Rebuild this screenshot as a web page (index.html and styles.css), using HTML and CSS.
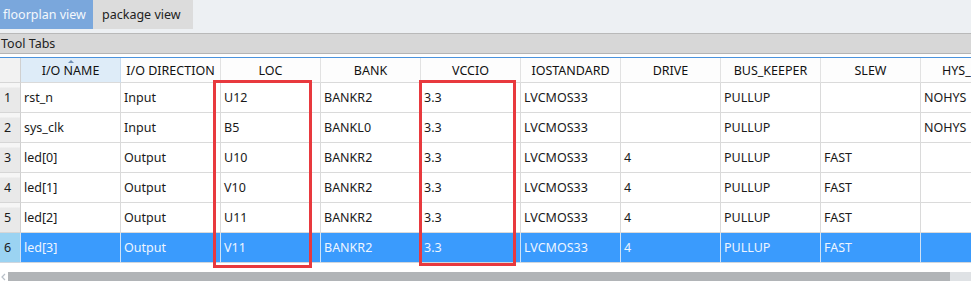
FILE: index.html
```html
<!DOCTYPE html>
<html lang="en">
<head>
  <meta charset="UTF-8">
  <title>IO Constraints</title>
  <link rel="stylesheet" href="styles.css">
</head>
<body>

<div class="tabbar">
  <div class="tab active">floorplan view</div>
  <div class="tab">package view</div>
</div>

<div class="toolbar">Tool Tabs</div>

<div class="grid-wrap">
  <div class="row head">
    <div class="cell num"></div>
    <div class="cell sorted">I/O NAME<span class="caret"></span></div>
    <div class="cell">I/O DIRECTION</div>
    <div class="cell">LOC</div>
    <div class="cell">BANK</div>
    <div class="cell">VCCIO</div>
    <div class="cell">IOSTANDARD</div>
    <div class="cell">DRIVE</div>
    <div class="cell">BUS_KEEPER</div>
    <div class="cell">SLEW</div>
    <div class="cell last">HYS_</div>
  </div>

  <div class="row">
    <div class="cell num">1</div>
    <div class="cell">rst_n</div>
    <div class="cell">Input</div>
    <div class="cell">U12</div>
    <div class="cell">BANKR2</div>
    <div class="cell">3.3</div>
    <div class="cell">LVCMOS33</div>
    <div class="cell"></div>
    <div class="cell">PULLUP</div>
    <div class="cell"></div>
    <div class="cell last">NOHYS</div>
  </div>
  <div class="row">
    <div class="cell num">2</div>
    <div class="cell">sys_clk</div>
    <div class="cell">Input</div>
    <div class="cell">B5</div>
    <div class="cell">BANKL0</div>
    <div class="cell">3.3</div>
    <div class="cell">LVCMOS33</div>
    <div class="cell"></div>
    <div class="cell">PULLUP</div>
    <div class="cell"></div>
    <div class="cell last">NOHYS</div>
  </div>
  <div class="row">
    <div class="cell num">3</div>
    <div class="cell">led[0]</div>
    <div class="cell">Output</div>
    <div class="cell">U10</div>
    <div class="cell">BANKR2</div>
    <div class="cell">3.3</div>
    <div class="cell">LVCMOS33</div>
    <div class="cell">4</div>
    <div class="cell">PULLUP</div>
    <div class="cell">FAST</div>
    <div class="cell last"></div>
  </div>
  <div class="row">
    <div class="cell num">4</div>
    <div class="cell">led[1]</div>
    <div class="cell">Output</div>
    <div class="cell">V10</div>
    <div class="cell">BANKR2</div>
    <div class="cell">3.3</div>
    <div class="cell">LVCMOS33</div>
    <div class="cell">4</div>
    <div class="cell">PULLUP</div>
    <div class="cell">FAST</div>
    <div class="cell last"></div>
  </div>
  <div class="row">
    <div class="cell num">5</div>
    <div class="cell">led[2]</div>
    <div class="cell">Output</div>
    <div class="cell">U11</div>
    <div class="cell">BANKR2</div>
    <div class="cell">3.3</div>
    <div class="cell">LVCMOS33</div>
    <div class="cell">4</div>
    <div class="cell">PULLUP</div>
    <div class="cell">FAST</div>
    <div class="cell last"></div>
  </div>
  <div class="row selected">
    <div class="cell num">6</div>
    <div class="cell">led[3]</div>
    <div class="cell">Output</div>
    <div class="cell">V11</div>
    <div class="cell">BANKR2</div>
    <div class="cell">3.3</div>
    <div class="cell">LVCMOS33</div>
    <div class="cell">4</div>
    <div class="cell">PULLUP</div>
    <div class="cell">FAST</div>
    <div class="cell last"></div>
  </div>

  <!-- red highlight boxes -->
  <div class="mark mark-loc"></div>
  <div class="mark mark-vccio"></div>
</div>

<div class="hscroll">
  <span class="arrow">
    <svg width="8" height="10" viewBox="0 0 8 10"><path d="M5 2 L2 5 L5 8" fill="none" stroke="#b9c0c8" stroke-width="1.2"/></svg>
  </span>
  <div class="thumb"></div>
</div>

</body>
</html>
```

FILE: styles.css
```css
body {
  margin: 0;
  font-family: "Noto Sans", "Open Sans", sans-serif;
  font-size: 12.5px;
  color: #1a1a1a;
  background: #fff;
  width: 971px;
  height: 281px;
  overflow: hidden;
}

/* top tabs */
.tabbar {
  display: flex;
  height: 29px;
  background: #edf0f3;
  border-bottom: 4px solid #edf0f3;
}

.tab {
  display: flex;
  align-items: center;
  padding: 0 7px 0 3px;
  width: 84px;
  background: #dcdcdc;
  color: #222;
  font-size: 12.5px;
}

.tab.active {
  width: 83px;
  background: #7aa7dc;
  color: #f4f8fd;
}

.tab + .tab {
  padding-left: 9px;
}

/* tool tabs strip */
.toolbar {
  height: 19px;
  line-height: 19px;
  padding-left: 1px;
  background: #d7d7d7;
  border-top: 1px solid #b9b9b9;
  border-bottom: 1px solid #b4b4b4;
  font-size: 12.5px;
  color: #222;
  margin-bottom: 3px;
}

/* grid */
.grid-wrap {
  position: relative;
  border-top: 1px solid #4a92dc;
  width: 971px;
}

.row {
  display: grid;
  grid-template-columns: 21px repeat(9, 100px) 50px;
  height: 30px;
}

.row.head {
  height: 25px;
}

.cell {
  box-sizing: border-box;
  border-right: 1px solid #dadada;
  border-bottom: 1px solid #dadada;
  padding: 0 3px;
  display: flex;
  align-items: center;
  white-space: nowrap;
  overflow: hidden;
}

.cell.last {
  border-right: none;
}

.head .cell {
  justify-content: center;
  background: #fdfdfd;
  color: #111;
  border-right-color: #e2e2e2;
  padding-top: 1px;
}

.head .cell.last {
  justify-content: flex-start;
  padding-left: 21px;
}

.head .cell.num {
  background: #f2f2f2;
}

.head .cell.sorted {
  position: relative;
  background: #deecf8;
  border-right-color: #c8dcef;
}

.caret {
  position: absolute;
  top: 2px;
  left: 47px;
  width: 0;
  height: 0;
  border-left: 3px solid transparent;
  border-right: 3px solid transparent;
  border-bottom: 3px solid #6f8fb3;
}

.cell.num {
  background: linear-gradient(#f6f6f6 0, #f6f6f6 4px, #e9e9e9 5px);
  padding-left: 4px;
  border-right-color: #d0d0d0;
  border-bottom-color: #d6d6d6;
}

.selected .cell {
  background: #3a9bfd;
  color: #eef5ff;
  border-right-color: #cfe2f6;
  border-bottom-color: #cfd6de;
}

.selected .cell.num {
  background: #9bd3f2;
  color: #1a1a1a;
}

/* red boxes drawn over the LOC and VCCIO columns */
.mark {
  position: absolute;
  top: 22px;
  box-sizing: border-box;
  border: 3px solid #e8393e;
}

.mark-loc {
  left: 213px;
  width: 99px;
  height: 188px;
}

.mark-vccio {
  left: 419px;
  width: 97px;
  height: 186px;
}

/* horizontal scrollbar */
.hscroll {
  display: flex;
  align-items: center;
  margin-top: 9px;
  height: 10px;
  background: #dfe2e5;
}

.arrow {
  display: flex;
  width: 8px;
  height: 10px;
  background: #fff;
}

.thumb {
  width: 942px;
  height: 10px;
  background: #b1b4b7;
}
```
